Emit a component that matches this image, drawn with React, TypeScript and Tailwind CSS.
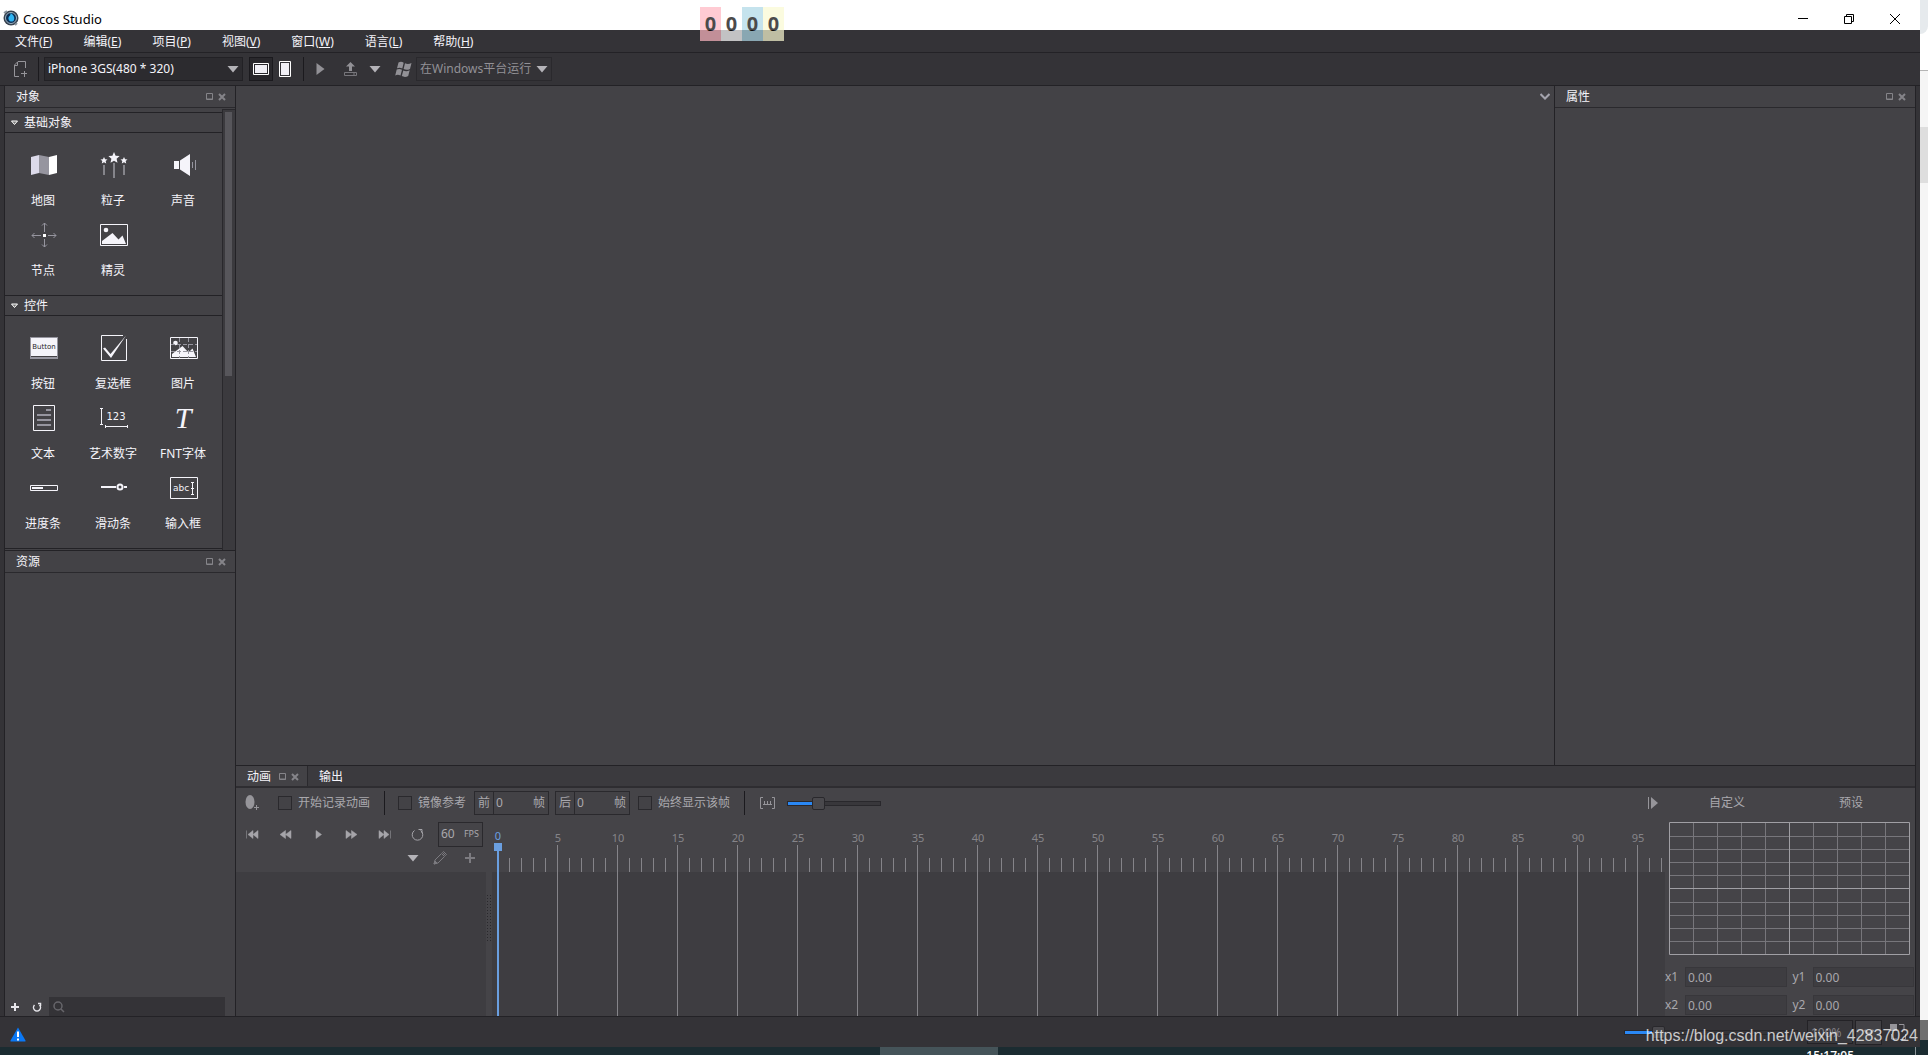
// App.tsx
import React, { useState } from "react";
import type { ReactNode } from "react";

const menus = [
  ["文件", "F"],
  ["编辑", "E"],
  ["项目", "P"],
  ["视图", "V"],
  ["窗口", "W"],
  ["语言", "L"],
  ["帮助", "H"],
];

const frames = Array.from({ length: 98 }, (_, i) => i);

/* ---------- Small shared pieces ---------- */

function DownArrow({ className = "" }: { className?: string }) {
  return (
    <svg width="12" height="8" viewBox="0 0 12 8" className={className}>
      <path d="M0.5 1h11L6 7.500z" fill="#b4b3b8" />
    </svg>
  );
}

function Separator() {
  return <div className="h-6 w-px bg-[#1b1a1e]" />;
}

function PanelButtons() {
  return (
    <div className="flex items-center gap-1">
      <button aria-label="最大化">
        <svg width="8" height="8" viewBox="0 0 8 8">
          <path d="M0.500 0.500h6v6h-6zM1 6h6" fill="none" stroke="#858489" />
        </svg>
      </button>
      <button aria-label="关闭">
        <svg width="8" height="8" viewBox="0 0 8 8">
          <path d="M1 1l6 6M7 1l-6 6" stroke="#858489" strokeWidth="2" />
        </svg>
      </button>
    </div>
  );
}

function PanelHeader({ title }: { title: string }) {
  return (
    <div className="flex h-[22px] shrink-0 items-center justify-between border-b border-[#2a292d] pr-[9px] pl-[11px]">
      <h2>{title}</h2>
      <PanelButtons />
    </div>
  );
}

function Check({ label }: { label: string }) {
  return (
    <label className="flex items-center gap-1.5 whitespace-nowrap text-[#a9a8ad]">
      <input
        type="checkbox"
        className="size-3.5 appearance-none border border-[#2a292d] bg-[#434246] checked:bg-[#2a88f5]"
      />
      {label}
    </label>
  );
}

function FrameCount({ label }: { label: string }) {
  return (
    <label className="flex h-6 w-[75px] items-center border border-[#2a292d] bg-[#434246] text-[#a9a8ad]">
      <span className="flex h-full w-[19px] items-center justify-center border-r border-[#2a292d]">
        {label}
      </span>
      <input
        type="text"
        defaultValue="0"
        className="w-0 min-w-0 flex-1 bg-transparent pl-0.5 outline-none"
      />
      <span className="pr-[3px]">帧</span>
    </label>
  );
}

/* ---------- Object icons ---------- */

const icons: Record<string, ReactNode> = {
  map: (
    <svg width="28" height="28" viewBox="0 0 28 28">
      <path d="M1 6l8-2v18l-8 2z" fill="#dcdaea" />
      <path d="M9 4l10 2v18L9 22z" fill="#96959f" />
      <path d="M19 6l8-2v18l-8 2z" fill="#fff" />
    </svg>
  ),
  particle: (
    <svg width="28" height="28" viewBox="0 0 28 28" fill="#f5f4fa">
      <path d="M14 1l1.600 3.700 4 .3-3 2.700.9 4L14 9.700l-3.500 2 .9-4-3-2.700 4-.3z" />
      <path d="M4 6l1.100 2.200 2.400.2-1.800 1.700.5 2.400L4 11.300l-2.200 1.200.5-2.400L.5 8.400l2.400-.2z" />
      <path d="M24 6l1.100 2.200 2.400.2-1.800 1.700.5 2.400-2.200-1.200-2.200 1.200.5-2.400-1.800-1.700 2.400-.2z" />
      <path d="M4 14v10M14 12v15M24 14v10" stroke="#c8c7cf" />
    </svg>
  ),
  sound: (
    <svg width="28" height="28" viewBox="0 0 28 28">
      <path d="M4 10h5v8H4zM10 9.500L20 3v22L10 18.500z" fill="#f5f4fa" />
      <path d="M22.500 11v6M25.500 9v10" stroke="#96959f" />
    </svg>
  ),
  node: (
    <svg width="28" height="28" viewBox="0 0 28 28" fill="none" stroke="#96959f">
      <path d="M14.500 2v9M14.500 18v8M2 14.500h9M18 14.500h8" />
      <path d="M12 4.500L14.500 2 17 4.500M12 23.500l2.500 2.500 2.500-2.500M4.500 12L2 14.500 4.500 17M23.500 12l2.500 2.500-2.500 2.500" />
      <rect x="13" y="13" width="3" height="3" fill="#fff" stroke="none" />
    </svg>
  ),
  sprite: (
    <svg width="28" height="28" viewBox="0 0 28 28">
      <path d="M.5 3.500h27v21H.5z" fill="none" stroke="#f5f4fa" />
      <circle cx="6" cy="9" r="2.300" fill="#f5f4fa" />
      <path d="M2 23v-3l10.500-8 6 6.500 4-4L26 23z" fill="#f5f4fa" />
    </svg>
  ),
  button: (
    <svg width="28" height="28" viewBox="0 0 28 28">
      <path d="M0 3h28v22H0z" fill="#96959f" />
      <path d="M1 4h26v18H1z" fill="#f5f4fa" />
      <path d="M1 22.500h26" stroke="#434145" />
      <text x="14" y="15" textAnchor="middle" fill="#29282c" className="font-['DejaVu_Sans'] text-[7px]">
        Button
      </text>
    </svg>
  ),
  checkbox: (
    <svg width="28" height="28" viewBox="0 0 28 28">
      <path d="M23 1.500H1.500v25h25V5" fill="none" stroke="#f5f4fa" />
      <path d="M3 14.500l2-1 5.500 6.500L26 1.500 11 24z" fill="#f5f4fa" />
    </svg>
  ),
  image: (
    <svg width="28" height="28" viewBox="0 0 28 28">
      <path d="M.5 3.500h27v21H.5z" fill="none" stroke="#f5f4fa" />
      <circle cx="5.500" cy="9" r="2.300" fill="#f5f4fa" />
      <path d="M2 23v-3l10.500-8 6 6.500 4-4L26 23z" fill="#f5f4fa" />
      <path d="M9.500 4v20M18.500 4v20M1 10.500h26M1 17.500h26" stroke="#96959f" strokeDasharray="4 2" />
    </svg>
  ),
  text: (
    <svg width="28" height="28" viewBox="0 0 28 28">
      <path d="M3.500 1.500h21v25h-21z" fill="none" stroke="#f5f4fa" />
      <path d="M16 6h5M7 11h14M7 16h14M7 21h14" stroke="#96959f" strokeWidth="2" />
    </svg>
  ),
  number: (
    <svg width="28" height="28" viewBox="0 0 28 28">
      <path d="M0 4.500h3M1.500 4v17M0 20.500h3M5.500 21v3M5 22.500h22M27.500 21v3" fill="none" stroke="#f5f4fa" />
      <text x="16" y="16" textAnchor="middle" fill="#f5f4fa" className="font-['DejaVu_Sans'] text-[10px]">
        123
      </text>
    </svg>
  ),
  font: (
    <svg width="28" height="28" viewBox="0 0 28 28">
      <text x="13" y="24" textAnchor="middle" fill="#f5f4fa" className="font-['Liberation_Serif',serif] text-[30px] italic">
        T
      </text>
    </svg>
  ),
  progress: (
    <svg width="28" height="28" viewBox="0 0 28 28">
      <path d="M.5 11.500h27v5H.5z" fill="none" stroke="#f5f4fa" />
      <path d="M2 13h11v2H2z" fill="#f5f4fa" />
    </svg>
  ),
  slider: (
    <svg width="28" height="28" viewBox="0 0 28 28" fill="none" stroke="#f5f4fa" strokeWidth="2">
      <path d="M1 13h15M24 13h3" />
      <circle cx="20" cy="13" r="2.500" />
    </svg>
  ),
  input: (
    <svg width="28" height="28" viewBox="0 0 28 28">
      <path d="M.5 3.500h27v21H.5z" fill="none" stroke="#f5f4fa" />
      <text x="3" y="17" fill="#f5f4fa" className="font-['DejaVu_Sans'] text-[9px]">
        abc
      </text>
      <path d="M22.500 9v11M21 8.500h3M21 20.500h3M21 14.500h3" stroke="#f5f4fa" />
    </svg>
  ),
};

const basicObjects = [
  ["map", "地图"],
  ["particle", "粒子"],
  ["sound", "声音"],
  ["node", "节点"],
  ["sprite", "精灵"],
];

const widgets = [
  ["button", "按钮"],
  ["checkbox", "复选框"],
  ["image", "图片"],
  ["text", "文本"],
  ["number", "艺术数字"],
  ["font", "FNT字体"],
  ["progress", "进度条"],
  ["slider", "滑动条"],
  ["input", "输入框"],
];

function ObjectSection({ title, items }: { title: string; items: string[][] }) {
  const [open, setOpen] = useState(true);

  return (
    <section className="border-b border-[#232226]">
      <button
        onClick={() => setOpen(!open)}
        className="flex h-5 w-full items-center gap-1.5 border-b border-[#232226] pl-1.5"
      >
        <svg width="7" height="6" viewBox="0 0 7 6">
          <path d="M.5 1h6l-3 3.500z" fill="#777" stroke="#fff" />
        </svg>
        {title}
      </button>
      {open && (
        <div className="grid grid-cols-[70px_70px_70px] pt-3 pb-2.5 pl-[3px]">
          {items.map(([icon, label]) => (
            <button key={icon} className="whitespace-nowrap">
              <span className="flex h-10 items-center justify-center pl-px">{icons[icon]}</span>
              <span className="flex h-[30px] items-center justify-center pt-0.5">{label}</span>
            </button>
          ))}
        </div>
      )}
    </section>
  );
}

/* ---------- Top bars ---------- */

function TitleBar() {
  return (
    <header className="flex h-[30px] shrink-0 items-center justify-between bg-white pt-1.5 text-black">
      <div className="flex items-center gap-1 pl-[3px]">
        <svg width="16" height="16" viewBox="0 0 16 16">
          <circle cx="8" cy="8" r="7.500" fill="#39434f" />
          <circle cx="8" cy="8" r="5.500" fill="#0b2f55" stroke="#9fb4c4" />
          <path d="M7.500 3c3 1.500 4.500 4.500 3.500 7s-5 2-5.500-1S8 6 7.500 3z" fill="#2fb4f2" />
          <path d="M1 3l3-2M12 15l2-2" stroke="#8a96a0" strokeWidth="2" />
        </svg>
        <h1 className="pt-px text-[13px] leading-4">Cocos Studio</h1>
      </div>
      <div className="flex pt-px pr-px">
        <button aria-label="最小化" className="flex w-[46px] justify-center">
          <svg width="10" height="10" viewBox="0 0 10 10">
            <path d="M0 4.500h10" stroke="#000" />
          </svg>
        </button>
        <button aria-label="还原" className="flex w-[45px] justify-center">
          <svg width="10" height="10" viewBox="0 0 10 10">
            <path d="M.5 2.500h7v7h-7zM2.500 2V.5h7v7H8" fill="none" stroke="#000" />
          </svg>
        </button>
        <button aria-label="关闭" className="flex w-12 justify-center">
          <svg width="10" height="10" viewBox="0 0 10 10">
            <path d="M0 0l10 10M10 0L0 10" stroke="#000" />
          </svg>
        </button>
      </div>
    </header>
  );
}

function MenuBar() {
  return (
    <nav className="flex h-[23px] shrink-0 items-center gap-[31px] border-b border-[#232226] px-[15px] pt-0.5">
      {menus.map(([name, key]) => (
        <button key={key} className="whitespace-nowrap">
          {name}(<span className="underline">{key}</span>)
        </button>
      ))}
    </nav>
  );
}

function Toolbar() {
  return (
    <div className="flex h-[33px] shrink-0 items-center border-b border-[#232226] pl-[13px]">
      <button aria-label="新建" className="mr-2.5">
        <svg width="15" height="16" viewBox="0 0 15 16" fill="none" stroke="#96959a">
          <path d="M5 .5h7.500V7M5 .5L1.500 4v11.500H6M4.500 1v3.500H1" />
          <path d="M8 12.500h6M11.500 10v6" />
        </svg>
      </button>
      <Separator />
      <div className="relative ml-[5px]">
        <select
          aria-label="设备"
          className="h-6 w-[199px] appearance-none border border-[#222125] bg-[#2c2b2f] pl-[3px] outline-none"
        >
          <option>iPhone 3GS(480 * 320)</option>
        </select>
        <DownArrow className="pointer-events-none absolute top-2 right-1" />
      </div>
      <button
        aria-label="横屏"
        className="ml-1.5 flex h-6 w-6 items-center justify-center border border-[#1b1a1e] bg-[#29282c]"
      >
        <svg width="16" height="12" viewBox="0 0 16 12">
          <path d="M.5.5h15v11H.5z" fill="none" stroke="#fff" />
          <path d="M2 2h12v8H2z" fill="#f0eff5" />
        </svg>
      </button>
      <button aria-label="竖屏" className="mr-3 ml-1.5">
        <svg width="12" height="16" viewBox="0 0 12 16">
          <path d="M.5.5h11v15H.5z" fill="none" stroke="#fff" />
          <path d="M2 2h8v12H2z" fill="#f0eff5" />
        </svg>
      </button>
      <Separator />
      <button aria-label="运行" className="ml-3">
        <svg width="9" height="12" viewBox="0 0 9 12">
          <path d="M.5 0L8.500 6l-8 6z" fill="#929196" />
        </svg>
      </button>
      <button aria-label="发布" className="ml-[18px]">
        <svg width="15" height="16" viewBox="0 0 15 16">
          <path d="M7.500 1L12 5.500H9V10H6V5.500H3z" fill="#929196" />
          <path d="M1.500 11.500h12v3h-12zM10 13h2" fill="none" stroke="#77767b" />
        </svg>
      </button>
      <button aria-label="发布选项" className="mr-3.5 ml-[11px]">
        <DownArrow />
      </button>
      <svg width="18" height="17" viewBox="0 0 18 17" fill="#929196">
        <path d="M3.500 1.500c2-1 3.500-.8 5.200.2L7.300 7.500c-1.700-1-3.200-1.200-5.300-.2zM10 2.300c2 1 4 1 6.500-.2L15 8c-2.500 1.200-4.500 1-6.400 0zM1.700 8.600c2-1 3.600-.8 5.300.2l-1.500 5.800c-1.700-1-3.200-1.200-5.300-.2zM8.300 9.400c2 1 4 1 6.400-.2l-1.500 5.900c-2.400 1.200-4.500 1-6.400 0z" />
      </svg>
      <div className="relative ml-[3px]">
        <select
          aria-label="运行平台"
          className="h-6 w-[136px] appearance-none border border-[#2a292d] bg-[#343337] pl-[3px] text-[#929196] outline-none"
        >
          <option>在Windows平台运行</option>
        </select>
        <DownArrow className="pointer-events-none absolute top-2 right-1" />
      </div>
    </div>
  );
}

/* ---------- Left side ---------- */

function LeftColumn() {
  return (
    <aside className="flex w-[231px] shrink-0 flex-col border-r border-[#232226] bg-[#434246]">
      <div className="flex h-[465px] flex-col border-b border-[#232226]">
        <PanelHeader title="对象" />
        <div className="flex min-h-0 flex-1">
          <div className="min-w-0 flex-1 overflow-hidden pt-1">
            <div className="border-t border-[#232226]">
              <ObjectSection title="基础对象" items={basicObjects} />
              <ObjectSection title="控件" items={widgets} />
            </div>
          </div>
          <div className="mt-px w-[13px] border-t border-l border-[#29282c] bg-[#3b3a3e] pt-0.5 pl-0.5">
            <div className="h-[264px] w-[7px] bg-[#57565b]" />
          </div>
        </div>
      </div>
      <div className="flex flex-1 flex-col">
        <PanelHeader title="资源" />
        <div className="flex-1" />
        <div className="flex h-[19px] items-center pr-2.5">
          <button aria-label="添加" className="ml-1.5">
            <svg width="8" height="8" viewBox="0 0 8 8">
              <path d="M4 0v8M0 4h8" stroke="#e6e5ea" strokeWidth="2" />
            </svg>
          </button>
          <button aria-label="刷新" className="mr-[7px] ml-[13px]">
            <svg width="10" height="10" viewBox="0 0 10 10" fill="none" stroke="#e6e5ea" strokeWidth="1.500">
              <path d="M2.500 3a3.500 3.500 0 1 0 5 0M6 1.500h2.500V4" />
            </svg>
          </button>
          <label className="flex h-full flex-1 items-center bg-[#343337] pl-1">
            <svg width="12" height="12" viewBox="0 0 12 12" fill="none" stroke="#67666b" strokeWidth="1.500">
              <circle cx="5" cy="5" r="4" />
              <path d="M8 8l3 3" />
            </svg>
            <input type="text" aria-label="搜索资源" className="w-0 flex-1 bg-transparent pl-1 outline-none" />
          </label>
        </div>
      </div>
    </aside>
  );
}

/* ---------- Animation panel ---------- */

const playback = [
  { name: "第一帧", d: "M.5 2.500v8M7 2.500L2 6.500l5 4zM12 2.500L7 6.500l5 4z" },
  { name: "上一帧", d: "M6.500 2.500L1 6.500l5.500 4zM12 2.500l-5.500 4 5.500 4z" },
  { name: "播放", d: "M4 2.500l5.500 4-5.500 4z" },
  { name: "下一帧", d: "M1 2.500l5.500 4-5.500 4zM6.500 2.500l5.500 4-5.500 4z" },
  { name: "最后一帧", d: "M12.500 2.500v8M1 2.500l5 4-5 4zM6 2.500l5 4-5 4z" },
];

function AnimationTools() {
  return (
    <div className="flex h-[30px] shrink-0 items-center pl-[9px]">
      <button aria-label="洋葱皮">
        <svg width="14" height="16" viewBox="0 0 14 16">
          <ellipse cx="5" cy="7" rx="4.500" ry="7" fill="#96959a" />
          <path d="M9 12.500h5M11.500 10v5" stroke="#96959a" />
        </svg>
      </button>
      <div className="mr-3.5 ml-[19px]">
        <Check label="开始记录动画" />
      </div>
      <Separator />
      <div className="mr-2 ml-[13px]">
        <Check label="镜像参考" />
      </div>
      <div className="mr-2 flex gap-1.5">
        <FrameCount label="前" />
        <FrameCount label="后" />
      </div>
      <Check label="始终显示该帧" />
      <div className="ml-3.5">
        <Separator />
      </div>
      <svg width="15" height="12" viewBox="0 0 15 12" fill="none" stroke="#96959a" className="ml-[15px]">
        <path d="M3 .5H.5v11H3M12 .5h2.500v11H12M3 7.500h9M4.500 4v3M7.500 4v3M10.500 4v3" />
      </svg>
      <input
        type="range"
        aria-label="时间轴缩放"
        defaultValue={30}
        className="ml-3 h-[5px] w-[94px] appearance-none border border-[#29282c] bg-[linear-gradient(to_right,#2a88f5_30%,#38373b_30%)] [&::-webkit-slider-thumb]:size-[13px] [&::-webkit-slider-thumb]:appearance-none [&::-webkit-slider-thumb]:rounded-xs [&::-webkit-slider-thumb]:border [&::-webkit-slider-thumb]:border-[#29282c] [&::-webkit-slider-thumb]:bg-[#4a494d]"
      />
      <button aria-label="展开曲线" className="mr-[7px] ml-auto">
        <svg width="10" height="12" viewBox="0 0 10 12">
          <path d="M.5 0v12" stroke="#96959a" />
          <path d="M3 0l7 6-7 6z" fill="#96959a" />
        </svg>
      </button>
    </div>
  );
}

function PlaybackControls() {
  return (
    <div className="h-[54px]">
      <div className="flex h-8 items-center pl-2.5">
        {playback.map((item) => (
          <button key={item.name} aria-label={item.name} className="mr-5">
            <svg width="13" height="13" viewBox="0 0 13 13">
              <path d={item.d} fill="#a5a4a9" stroke="#a5a4a9" strokeWidth="0.500" />
            </svg>
          </button>
        ))}
        <button aria-label="循环" className="mr-3.5">
          <svg width="13" height="13" viewBox="0 0 13 13" fill="none" stroke="#a5a4a9">
            <path d="M3.500 2.500a5.300 5.300 0 1 0 6 0M7.500 1.500h3.500V5" />
          </svg>
        </button>
        <label className="flex h-[25px] w-[45px] items-center border border-[#2a292d] pr-[3px] text-[#a9a8ad]">
          <input type="text" defaultValue="60" className="w-0 flex-1 bg-transparent pl-0.5 outline-none" />
          <span className="text-[9px]">FPS</span>
        </label>
      </div>
      <div className="flex h-4 items-center justify-end pr-[11px]">
        <button aria-label="帧选项">
          <DownArrow />
        </button>
        <button aria-label="编辑帧" className="mr-[18px] ml-3.5">
          <svg width="14" height="14" viewBox="0 0 14 14" fill="none" stroke="#7c7b80">
            <path d="M1 13l1-4 6.500-6.500 3 3L5 12zM9.500 1.500l1-1 3 3-1 1z" />
            <path d="M1 13l1-3 2 2z" fill="#7c7b80" />
          </svg>
        </button>
        <button aria-label="添加帧">
          <svg width="10" height="10" viewBox="0 0 10 10">
            <path d="M5 0v10M0 5h10" stroke="#7c7b80" strokeWidth="2" />
          </svg>
        </button>
      </div>
    </div>
  );
}

function Timeline() {
  return (
    <div className="relative flex min-w-0 flex-1 flex-col overflow-hidden">
      <div className="flex h-[54px] shrink-0 pl-[5px]">
        {frames.map((frame) =>
          frame % 5 === 0 ? (
            <div key={frame} className="flex w-3 shrink-0 flex-col">
              <span
                className={
                  frame === 0
                    ? "flex h-[27px] w-0.5 items-end justify-center pb-[3px] text-[11px] leading-3 text-[#6a9fe0]"
                    : "flex h-[27px] w-0.5 items-end justify-center pb-px text-[11px] leading-3 text-[#858489]"
                }
              >
                {frame}
              </span>
              <div className="w-px flex-1 bg-[#858489]" />
            </div>
          ) : (
            <div key={frame} className="flex w-3 shrink-0 items-end">
              <div className="h-3.5 w-px bg-[#858489]" />
            </div>
          )
        )}
      </div>
      <div className="flex flex-1 bg-[#3e3d41] pl-[5px]">
        {frames
          .filter((frame) => frame % 5 === 0)
          .map((frame) => (
            <div key={frame} className="w-[60px] shrink-0 border-l border-[#858489]" />
          ))}
      </div>
      {/* Playhead */}
      <div className="absolute top-[25px] bottom-0 left-0.5 flex w-2 flex-col items-center">
        <div className="size-2 bg-[#6a9fe0]" />
        <div className="w-0.5 flex-1 bg-[#6a9fe0]" />
      </div>
    </div>
  );
}

function CurveField({ label }: { label: string }) {
  return (
    <label className="flex h-5 flex-1 items-center">
      <span className="w-5">{label}</span>
      <input
        type="text"
        defaultValue="0.00"
        className="h-full w-0 flex-1 border border-[#38373b] bg-[#3e3d41] pl-0.5 outline-none"
      />
    </label>
  );
}

function CurvePanel() {
  return (
    <div className="w-[250px] shrink-0 text-[#a9a8ad]">
      <div className="grid h-[30px] grid-cols-2 items-center pr-0.5">
        <button>自定义</button>
        <button>预设</button>
      </div>
      <svg width="241" height="133" viewBox="0 0 241 133" fill="none" className="mt-1 ml-1">
        <path
          d="M24.500 0v133M48.500 0v133M72.500 0v133M96.500 0v133M144.500 0v133M168.500 0v133M192.500 0v133M216.500 0v133M0 14.500h241M0 27.500h241M0 40.500h241M0 53.500h241M0 80.500h241M0 93.500h241M0 106.500h241M0 119.500h241"
          stroke="#77767b"
        />
        <path d="M.5.5h240v132H.5zM120.500 0v133M0 66.500h241" stroke="#a09fa4" />
      </svg>
      <div className="mt-3 grid grid-cols-2 gap-x-1.5 gap-y-2 pr-px">
        <CurveField label="x1" />
        <CurveField label="y1" />
        <CurveField label="x2" />
        <CurveField label="y2" />
      </div>
    </div>
  );
}

function AnimationPanel() {
  return (
    <section className="flex h-[251px] shrink-0 flex-col border-t border-[#232226] bg-[#454448]">
      <div className="flex h-[22px] shrink-0 border-b-2 border-[#2e2d31] bg-[#3b3a3e]">
        <div className="flex items-center gap-2 border-r border-[#2a292d] bg-[#434246] pt-0.5 pr-2 pl-[11px]">
          <button>动画</button>
          <PanelButtons />
        </div>
        <button className="px-[11px] pt-0.5">输出</button>
      </div>
      <div className="flex min-h-0 flex-1">
        <div className="flex min-w-0 flex-1 flex-col">
          <AnimationTools />
          <div className="flex min-h-0 flex-1">
            <div className="flex w-[250px] shrink-0 flex-col">
              <PlaybackControls />
              <div className="flex-1 bg-[#3e3d41]" />
            </div>
            <div className="w-1.5 shrink-0 pt-[76px]">
              <div className="h-[47px] w-[5px] bg-[radial-gradient(circle,#29282c_40%,transparent_45%)] bg-size-[3px_3px]" />
            </div>
            <Timeline />
          </div>
        </div>
        <CurvePanel />
      </div>
    </section>
  );
}

/* ---------- Bottom ---------- */

function StatusBar() {
  return (
    <footer className="flex h-[31px] shrink-0 items-center border-t border-[#232226] pl-2.5">
      <svg width="16" height="15" viewBox="0 0 16 15" className="mt-1">
        <path d="M8 0.500L15.500 13.500Q16 14.500 15 14.500H1Q0 14.500.5 13.500z" fill="#0a78f5" />
        <path d="M7 4.500h2v5.500H7zM7 11.500h2v2H7z" fill="#fff" />
      </svg>
      <input
        type="range"
        aria-label="画布缩放"
        defaultValue={17}
        className="mr-[9px] ml-auto h-[5px] w-[174px] appearance-none border border-[#29282c] bg-[linear-gradient(to_right,#2a88f5_17%,#343337_17%)] [&::-webkit-slider-thumb]:size-[13px] [&::-webkit-slider-thumb]:appearance-none [&::-webkit-slider-thumb]:rounded-xs [&::-webkit-slider-thumb]:border [&::-webkit-slider-thumb]:border-[#29282c] [&::-webkit-slider-thumb]:bg-[#4a494d]"
      />
      <input
        type="text"
        aria-label="缩放比例"
        defaultValue="100%"
        className="h-6 w-[46px] border border-[#232226] bg-[#38373b] pl-[3px] text-[#85848a] outline-none"
      />
      <button
        aria-label="缩放选项"
        className="ml-0.5 flex h-[25px] w-[27px] items-center justify-center border border-[#232226] bg-[#434246]"
      >
        <svg width="10" height="7" viewBox="0 0 10 7">
          <path d="M.5 1L5 5.500 9.500 1" fill="none" stroke="#85848a" strokeWidth="2" />
        </svg>
      </button>
      <button aria-label="全屏" className="mr-3 ml-2">
        <svg width="18" height="18" viewBox="0 0 18 18" fill="none" stroke="#96959a">
          <path d="M0 1h7v7H0z" fill="#96959a" stroke="none" />
          <path d="M9 1.500h5V7M1.500 11v5H7M10 16.500h5.500V11" />
        </svg>
      </button>
    </footer>
  );
}

function Countdown() {
  return (
    <div className="absolute top-[7px] left-[700px] flex h-[34px] text-center text-xl leading-[34px] font-bold text-black opacity-70">
      <span className="w-[21px] bg-[#ffb6c1]">0</span>
      <span className="w-[21px] bg-white">0</span>
      <span className="w-[21px] bg-[#add8e6]">0</span>
      <span className="w-[21px] bg-[#fafad2]">0</span>
    </div>
  );
}

export default function App() {
  return (
    <div className="relative flex h-screen overflow-hidden bg-[#1b2c31] font-['Noto_Sans','Noto_Sans_CJK_SC',sans-serif] text-xs text-[#f5f4fa]">
      <div className="flex min-w-0 flex-1 flex-col">
        <div className="flex min-h-0 flex-1 flex-col bg-[#343337]">
          <TitleBar />
          <MenuBar />
          <Toolbar />
          <div className="flex min-h-0 flex-1 px-1">
            <div className="flex min-w-0 flex-1 border-x border-[#232226] bg-[#434246]">
              <LeftColumn />
              <div className="flex min-w-0 flex-1 flex-col">
                <div className="flex min-h-0 flex-1">
                  <main className="flex flex-1 items-start justify-end border-r border-[#232226] p-1">
                    <button aria-label="画布列表" className="mt-[3px]">
                      <svg width="10" height="7" viewBox="0 0 10 7">
                        <path d="M.5 1L5 5.500 9.500 1" fill="none" stroke="#a5a4ae" strokeWidth="2" />
                      </svg>
                    </button>
                  </main>
                  <aside className="w-[360px] shrink-0">
                    <PanelHeader title="属性" />
                  </aside>
                </div>
                <AnimationPanel />
              </div>
            </div>
          </div>
          <StatusBar />
        </div>
        {/* Windows taskbar */}
        <div className="flex h-2 shrink-0 overflow-hidden pl-[880px]">
          <div className="w-[118px] bg-[#455459]" />
          <div className="mr-[61px] ml-auto pt-[3px] leading-3 font-medium text-white">15:17:05</div>
          <div className="mr-1 w-px bg-[#8a9498]" />
        </div>
      </div>
      {/* Browser window behind */}
      <div className="flex w-2 shrink-0 flex-col bg-[#f5f5f5]">
        <div className="h-[34px] bg-white">
          <div className="h-full rounded-br-lg bg-[#e6eaed]" />
        </div>
        <div className="h-[37px] border-b border-[#b4b4b4] bg-white" />
        <div className="mt-14 h-14 bg-[#dedede]" />
        <div className="mt-auto h-5 bg-[#6f6f6f]" />
        <div className="h-[15px] bg-[#1b2c31]" />
      </div>
      <Countdown />
      <p className="absolute right-2.5 bottom-[9px] font-['Liberation_Sans',sans-serif] text-base leading-5 whitespace-nowrap text-white/75">
        https://blog.csdn.net/weixin_42837024
      </p>
    </div>
  );
}
